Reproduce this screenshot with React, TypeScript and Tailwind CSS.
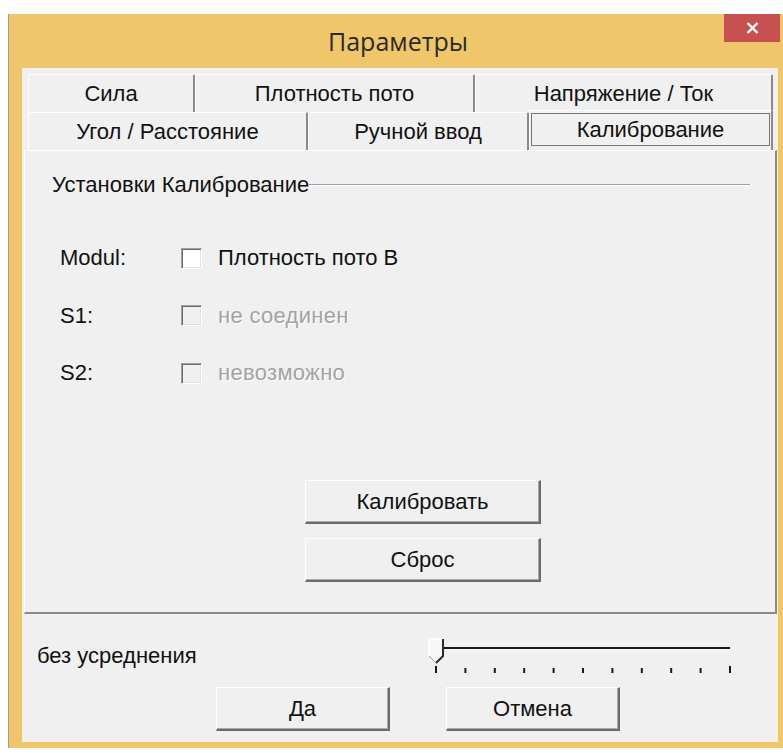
import type { ReactNode } from 'react';

const font = { fontFamily: '"Liberation Sans", Arial, sans-serif' };

function Tab({ label, width, active }: { label: string; width: number; active?: boolean }) {
  if (active) {
    return (
      <div
        style={{ width }}
        className="-mt-[2px] flex h-[40px] shrink-0 items-start rounded-t-[2px] border-l border-t border-r-2 border-l-white border-t-white border-r-[#8a8a8a] bg-[#f0f0f0] px-[1px] pt-[2px]"
      >
        <div className="relative flex h-[33px] w-full items-center justify-center">
          {/* focus rectangle */}
          <svg className="pointer-events-none absolute inset-0 h-full w-full" preserveAspectRatio="none">
            <rect
              x="0.5"
              y="0.5"
              width="calc(100% - 1px)"
              height="calc(100% - 1px)"
              fill="none"
              stroke="#000"
              strokeWidth="1"
              strokeDasharray="1 1"
            />
          </svg>
          <span className="text-[22px] leading-[24px] text-[#111]">{label}</span>
        </div>
      </div>
    );
  }
  return (
    <div
      style={{ width }}
      className="flex h-[38px] shrink-0 items-center justify-center rounded-t-[2px] border-l border-t border-r-2 border-l-white border-t-white border-r-[#8a8a8a] bg-[#f0f0f0] pt-[1px]"
    >
      <span className="text-[22px] leading-[24px] text-[#111]">{label}</span>
    </div>
  );
}

function Button({ children, width, height }: { children: ReactNode; width: number; height: number }) {
  return (
    <button
      type="button"
      style={{ width, height }}
      className="flex shrink-0 items-center justify-center border border-b-2 border-r-2 border-l-white border-t-white border-b-[#6b6b6b] border-r-[#6b6b6b] bg-[#f0f0f0] text-[22px] leading-[24px] text-[#111] shadow-[inset_-1px_-1px_0_#a9a9a9]"
    >
      {children}
    </button>
  );
}

function CheckRow({ name, text, disabled }: { name: string; text: string; disabled?: boolean }) {
  return (
    <div className="flex h-[24px] items-center">
      <span className="w-[121px] text-[22px] leading-[24px] text-[#111]">{name}</span>
      <span
        className={
          'h-[21px] w-[21px] shrink-0 border border-b-white border-l-[#a0a0a0] border-r-white border-t-[#a0a0a0] shadow-[inset_1px_1px_0_#6b6b6b,inset_-1px_-1px_0_#e3e3e3] ' +
          (disabled ? 'bg-[#f0f0f0]' : 'bg-white')
        }
      />
      <span
        className={
          'ml-[16px] text-[22px] leading-[24px] ' +
          (disabled ? 'tracking-[0.3px] text-[#a3a3a3] [text-shadow:1px_1px_0_#fff]' : 'text-[#111]')
        }
      >
        {text}
      </span>
    </div>
  );
}

function Trackbar() {
  const ticks = Array.from({ length: 11 }, (_, i) => 8 + i * 29.4);
  return (
    <svg width="312" height="38" viewBox="0 0 312 38" className="block">
      <line x1="6" y1="10" x2="302" y2="10" stroke="#1a1a1a" strokeWidth="2" />
      <line x1="6" y1="12" x2="303" y2="12" stroke="#ffffff" strokeWidth="1" />
      {ticks.map((x, i) => (
        <line
          key={i}
          x1={x}
          x2={x}
          y1={i === 0 || i === ticks.length - 1 ? 28 : 30}
          y2="35"
          stroke="#1a1a1a"
          strokeWidth="2"
        />
      ))}
      <path d="M1 1 H15 V18 L8 25 L1 18 Z" fill="#f7f7f7" />
      <path d="M1 18 V1 H15" fill="none" stroke="#ffffff" strokeWidth="1.5" />
      <path d="M15 1 V18 L8 25" fill="none" stroke="#2a2a2a" strokeWidth="2" />
      <path d="M1 18 L8 25" fill="none" stroke="#9a9a9a" strokeWidth="1" />
    </svg>
  );
}

export default function App() {
  return (
    <div style={font} className="h-[753px] w-[783px] overflow-hidden bg-white pl-[8px] pt-[14px]">
      <div className="flex h-[734px] w-[775px] flex-col border-l border-[#9c9c9c] bg-[#efc66a]">
        {/* title bar */}
        <div className="relative flex h-[54px] shrink-0 items-center justify-center">
          <span
            style={{ fontFamily: '"Open Sans", "Noto Sans", sans-serif' }}
            className="ml-[4px] text-[25px] leading-[30px] text-[#2a2a2a]"
          >
            Параметры
          </span>
          <div className="absolute right-[3px] top-0 flex h-[28px] w-[56px] items-center justify-center bg-[#c75050]">
            <svg width="13" height="12" viewBox="0 0 13 12">
              <path d="M1.5 1 L11.5 11 M11.5 1 L1.5 11" stroke="#fff" strokeWidth="2.4" />
            </svg>
          </div>
        </div>

        {/* client area */}
        <div className="ml-[13px] flex h-[674px] w-[756px] flex-col bg-[#f0f0f0]">
          {/* tab strip */}
          <div className="flex flex-col pl-[6px] pt-[6px]">
            <div className="flex">
              <Tab label="Сила" width={167} />
              <Tab label="Плотность пото" width={280} />
              <Tab label="Напряжение / Ток" width={298} />
            </div>
            <div className="flex">
              <Tab label="Угол / Расстояние" width={280} />
              <Tab label="Ручной ввод" width={221} />
              <Tab label="Калибрование" width={244} active />
            </div>
          </div>

          {/* tab page */}
          <div className="ml-[2px] flex h-[464px] w-[753px] shrink-0 flex-col border-l border-t border-b-2 border-r-2 border-l-white border-t-white border-b-[#8a8a8a] border-r-[#8a8a8a]">
            <div className="mt-[22px] flex items-center pl-[27px] pr-[25px]">
              <span className="text-[22px] leading-[24px] text-[#111]">Установки Калибрование</span>
              <div className="h-[2px] flex-1 border-b border-t border-b-white border-t-[#a0a0a0]" />
            </div>

            <div className="mt-[49px] flex flex-col gap-[33.5px] pl-[35px]">
              <CheckRow name="Modul:" text="Плотность пото В" />
              <CheckRow name="S1:" text="не соединен" disabled />
              <CheckRow name="S2:" text="невозможно" disabled />
            </div>

            <div className="ml-[280px] mt-[95px] flex flex-col gap-[14px]">
              <Button width={236} height={44}>
                Калибровать
              </Button>
              <Button width={236} height={44}>
                Сброс
              </Button>
            </div>
          </div>

          {/* averaging + dialog buttons */}
          <div className="flex items-start pl-[15px] pt-[30px]">
            <span className="w-[391px] text-[22px] leading-[24px] text-[#111]">без усреднения</span>
            <div className="-mt-[6px]">
              <Trackbar />
            </div>
          </div>
          <div className="ml-[194px] mt-[11px] flex gap-[56px]">
            <Button width={174} height={44}>
              Да
            </Button>
            <Button width={174} height={44}>
              Отмена
            </Button>
          </div>
        </div>
      </div>
    </div>
  );
}
